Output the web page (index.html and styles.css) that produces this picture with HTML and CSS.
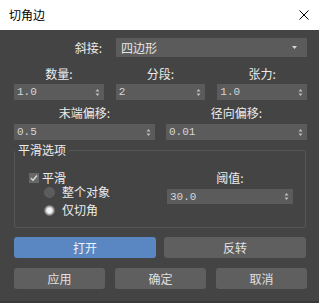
FILE: index.html
```html
<!DOCTYPE html>
<html lang="zh">
<head>
<meta charset="utf-8">
<link rel="stylesheet" href="styles.css">
</head>
<body>
<div class="dialog">
  <div class="titlebar">
    <span class="title">切角边</span>
    <svg class="close" width="10" height="10" viewBox="0 0 10 10"><path d="M0.5 0.5L9.5 9.5M9.5 0.5L0.5 9.5" stroke="#000" stroke-width="1"/></svg>
  </div>
  <div class="content">
    <div class="mitre">
      <span class="label right">斜接:</span>
      <div class="select"><span>四边形</span><svg width="5" height="3" viewBox="0 0 5 3"><path d="M0 0H5L2.5 3Z" fill="#d8d8d8"/></svg></div>
    </div>

    <div class="cols3 labels">
      <span>数量:</span><span>分段:</span><span>张力:</span>
    </div>
    <div class="cols3">
      <div class="spin"><span>1.0</span><svg width="5" height="9" viewBox="0 0 5 9"><path d="M0.5 3.5L2.5 1L4.5 3.5ZM0.5 5.5L2.5 8L4.5 5.5Z" fill="#bdbdbd"/></svg></div>
      <div class="spin"><span>2</span><svg width="5" height="9" viewBox="0 0 5 9"><path d="M0.5 3.5L2.5 1L4.5 3.5ZM0.5 5.5L2.5 8L4.5 5.5Z" fill="#bdbdbd"/></svg></div>
      <div class="spin"><span>1.0</span><svg width="5" height="9" viewBox="0 0 5 9"><path d="M0.5 3.5L2.5 1L4.5 3.5ZM0.5 5.5L2.5 8L4.5 5.5Z" fill="#bdbdbd"/></svg></div>
    </div>

    <div class="cols2 labels labels2">
      <span>末端偏移:</span><span>径向偏移:</span>
    </div>
    <div class="cols2 spins2">
      <div class="spin"><span>0.5</span><svg width="5" height="9" viewBox="0 0 5 9"><path d="M0.5 3.5L2.5 1L4.5 3.5ZM0.5 5.5L2.5 8L4.5 5.5Z" fill="#bdbdbd"/></svg></div>
      <div class="spin"><span>0.01</span><svg width="5" height="9" viewBox="0 0 5 9"><path d="M0.5 3.5L2.5 1L4.5 3.5ZM0.5 5.5L2.5 8L4.5 5.5Z" fill="#bdbdbd"/></svg></div>
    </div>

    <fieldset class="group">
      <legend>平滑选项</legend>
      <div class="group-body">
        <div class="opts">
          <div class="check-row">
            <span class="checkbox"><svg width="8" height="8" viewBox="0 0 8 8"><path d="M1 4.2L3 6.2L7 1.5" stroke="#dcdcdc" stroke-width="1.4" fill="none"/></svg></span>
            <span>平滑</span>
          </div>
          <div class="radio-row r1"><span class="radio"></span><span>整个对象</span></div>
          <div class="radio-row r2"><span class="radio on"></span><span>仅切角</span></div>
        </div>
        <div class="thresh">
          <span class="tlabel">阈值:</span>
          <div class="spin tspin"><span>30.0</span><svg width="5" height="9" viewBox="0 0 5 9"><path d="M0.5 3.5L2.5 1L4.5 3.5ZM0.5 5.5L2.5 8L4.5 5.5Z" fill="#bdbdbd"/></svg></div>
        </div>
      </div>
    </fieldset>

    <div class="btnrow2">
      <div class="btn primary">打开</div>
      <div class="btn">反转</div>
    </div>
    <div class="btnrow3">
      <div class="btn">应用</div>
      <div class="btn">确定</div>
      <div class="btn">取消</div>
    </div>
  </div>
</div>
</body>
</html>
```

FILE: styles.css
```css
html, body {
  margin: 0;
  padding: 0;
  background: #393939;
}
body {
  font-family: "Noto Sans CJK SC", "Noto Sans", sans-serif;
  font-size: 12px;
  line-height: 16px;
}
.dialog {
  width: 319px;
  height: 301px;
  background: #444444;
  display: flex;
  flex-direction: column;
}
.titlebar {
  height: 30px;
  flex: none;
  background: #ffffff;
  color: #000;
  display: flex;
  align-items: center;
  justify-content: space-between;
  padding: 0 10px 0 9px;
  box-sizing: border-box;
  font-size: 12px;
}
.close { display: block; }
.content {
  padding: 0 12px 0 14px;
  color: #ececec;
}
.mitre {
  display: grid;
  grid-template-columns: 88px 1fr;
  column-gap: 14px;
  align-items: center;
  margin-top: 8px;
}
.right { text-align: right; }
.select {
  height: 19px;
  background: #5b5b5b;
  display: flex;
  align-items: center;
  justify-content: space-between;
  padding: 0 10px 0 5px;
  color: #e6e6e6;
}
.select svg { display: block; }
.cols3 {
  display: grid;
  grid-template-columns: repeat(3, 1fr);
  column-gap: 12px;
}
.cols2 {
  display: grid;
  grid-template-columns: repeat(2, 1fr);
  column-gap: 11px;
}
.labels {
  text-align: center;
  margin-top: 9px;
  margin-bottom: 2px;
}
.labels2 {
  margin-top: 5px;
  margin-bottom: 3px;
}
.spin {
  height: 16px;
  background: #5b5b5b;
  display: flex;
  align-items: center;
  justify-content: space-between;
  padding: 0 4px 0 3px;
  font-family: "Liberation Mono", "DejaVu Sans Mono", monospace;
  font-size: 11px;
  color: #d6d6d6;
}
.spin svg { display: block; }
.group {
  margin: 2px 1px 0 0;
  padding: 0;
  border: 1px solid #575757;
  border-radius: 2px;
  min-inline-size: 0;
}
.group legend {
  padding: 0 3px;
  margin-left: 0;
  color: #ececec;
  line-height: 16px;
}
.group-body {
  display: grid;
  grid-template-columns: 152px 126px;
  padding: 13px 0 10px 0;
}
.opts {
  padding-left: 14px;
}
.check-row, .radio-row {
  display: flex;
  align-items: center;
  height: 14px;
}
.check-row { gap: 3px; }
.checkbox {
  width: 10px;
  height: 10px;
  background: #686868;
  display: flex;
  align-items: center;
  justify-content: center;
}
.checkbox svg { display: block; }
.radio-row {
  padding-left: 15px;
  gap: 7px;
}
.r1 { margin-top: 0; }
.r2 { margin-top: 4px; }
.radio {
  width: 11px;
  height: 11px;
  border-radius: 50%;
  background: #5c5c5c;
  box-sizing: border-box;
  border: 1px solid #606060;
}
.radio.on {
  background: radial-gradient(circle, #f4f4f4 0 2.5px, #bdbdbd 3.5px, #8a8a8a 5px);
  border-color: #7a7a7a;
}
.thresh {
  display: flex;
  flex-direction: column;
  align-items: stretch;
}
.tlabel {
  text-align: center;
  margin-top: -1px;
  height: 15px;
}
.tspin {
  margin-top: 4px;
  height: 15px;
}
.btnrow2 {
  display: grid;
  grid-template-columns: 142px 142px;
  column-gap: 8px;
  margin-top: 9px;
}
.btnrow3 {
  display: grid;
  grid-template-columns: repeat(3, 91px);
  column-gap: 10px;
  margin-top: 10px;
}
.btn {
  height: 21px;
  border-radius: 3px;
  background: #5f5f5f;
  color: #e0e0e0;
  display: flex;
  align-items: center;
  justify-content: center;
}
.btn.primary {
  background: #5a87c2;
  color: #eef2f8;
}
```
